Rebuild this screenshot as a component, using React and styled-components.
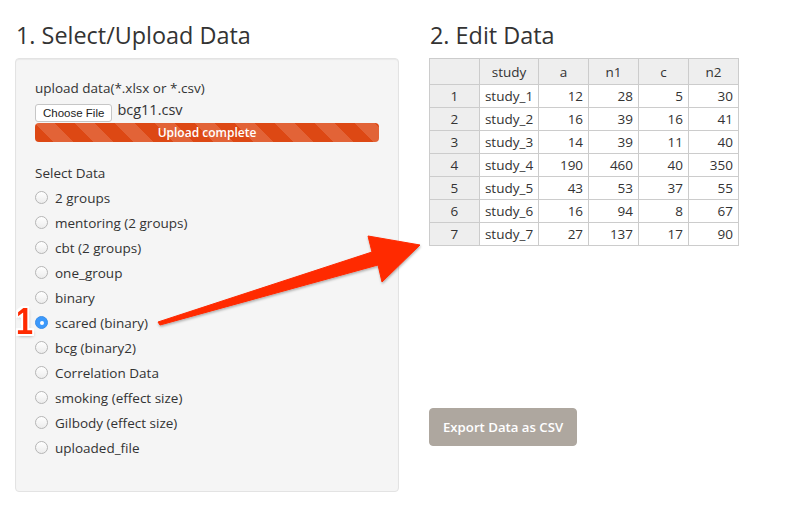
import styled, { createGlobalStyle } from 'styled-components'

const GlobalStyle = createGlobalStyle`
  html, body {
    margin: 0;
    background: #fff;
    font-family: "Open Sans", "Liberation Sans", sans-serif;
    font-size: 13.5px;
    color: #333;
  }
`

const DATASETS = [
  '2 groups',
  'mentoring (2 groups)',
  'cbt (2 groups)',
  'one_group',
  'binary',
  'scared (binary)',
  'bcg (binary2)',
  'Correlation Data',
  'smoking (effect size)',
  'Gilbody (effect size)',
  'uploaded_file',
]

const ROWS = [
  ['study_1', 12, 28, 5, 30],
  ['study_2', 16, 39, 16, 41],
  ['study_3', 14, 39, 11, 40],
  ['study_4', 190, 460, 40, 350],
  ['study_5', 43, 53, 37, 55],
  ['study_6', 16, 94, 8, 67],
  ['study_7', 27, 137, 17, 90],
]

const Page = styled.div`
  position: relative;
  display: flex;
  gap: 30px;
  padding-left: 15px;
  width: 789px;
  height: 515px;
  box-sizing: border-box;
`

const Column = styled.div`
  width: ${({ $w }) => $w}px;
  display: flex;
  flex-direction: column;
`

const Heading = styled.h3`
  font-size: 23.4px;
  font-weight: 400;
  line-height: 28px;
  margin: 21px 0 9px 1px;
  color: #333;
`

const Well = styled.div`
  background: #f5f5f5;
  border: 1px solid #e3e3e3;
  border-radius: 4px;
  box-shadow: inset 0 1px 1px rgba(0, 0, 0, 0.05);
  padding: 19px 19px 31px;
`

const Label = styled.div`
  line-height: 20px;
`

const FileRow = styled.div`
  display: flex;
  align-items: center;
  gap: 5px;
  height: 22px;
  margin-top: 2px;
`

const FileButton = styled.button`
  font-family: "Liberation Sans", Arial, sans-serif;
  font-size: 11.5px;
  height: 18px;
  padding: 0 7px;
  background: #fff;
  border: 1px solid #c6c6c6;
  border-radius: 3px;
  color: #222;
  margin-top: 4px;
`

const FileName = styled.span`
  font-size: 14.5px;
  margin-top: -3px;
`

const Progress = styled.div`
  height: 19px;
  border-radius: 4px;
  background-color: #dd4814;
  background-image: linear-gradient(
    45deg,
    rgba(255, 255, 255, 0.15) 25%,
    transparent 25%,
    transparent 50%,
    rgba(255, 255, 255, 0.15) 50%,
    rgba(255, 255, 255, 0.15) 75%,
    transparent 75%,
    transparent
  );
  background-size: 40px 40px;
  color: #fff;
  font-size: 12px;
  font-weight: 600;
  line-height: 19px;
  text-align: center;
  margin-top: 1px;
`

const SectionLabel = styled.div`
  line-height: 20px;
  margin-top: 21px;
  margin-bottom: 2px;
`

const RadioRow = styled.label`
  display: flex;
  align-items: center;
  gap: 7px;
  height: 25px;
`

const Radio = styled.span`
  width: 13px;
  height: 13px;
  border-radius: 50%;
  box-sizing: border-box;
  flex: none;
  background: ${({ $on }) => ($on ? '#3b99fc' : 'linear-gradient(#fff, #ececec)')};
  border: 1px solid ${({ $on }) => ($on ? '#3b8ee8' : '#b5b5b5')};
  display: flex;
  align-items: center;
  justify-content: center;

  &::after {
    content: '';
    width: 4px;
    height: 4px;
    border-radius: 50%;
    background: #fff;
    display: ${({ $on }) => ($on ? 'block' : 'none')};
  }
`

const Table = styled.table`
  border-collapse: collapse;
  width: 310px;
  font-size: 13.5px;
`

const Th = styled.th`
  background: #eee;
  border: 1px solid #ccc;
  font-weight: 400;
  height: 25px;
  padding: 0;
  text-align: center;
`

const Td = styled.td`
  border: 1px solid #ccc;
  height: 22px;
  padding: 0 5px;
  background: ${({ $head }) => ($head ? '#eee' : '#fff')};
  text-align: ${({ $align }) => $align || 'right'};
`

const ExportButton = styled.button`
  align-self: flex-start;
  margin-top: 162px;
  background: #aea79f;
  border: 1px solid #aea79f;
  border-radius: 4px;
  color: #fff;
  font-family: inherit;
  font-size: 13.2px;
  font-weight: 600;
  padding: 8px 13px;
  line-height: 20px;
`

const Arrow = styled.svg`
  position: absolute;
  left: 0;
  top: 0;
  pointer-events: none;
`

const Marker = styled.span`
  position: absolute;
  left: 16px;
  top: 301px;
  font-family: "Liberation Sans", Arial, sans-serif;
  font-size: 36px;
  font-weight: 700;
  color: #ff2a00;
  transform: scaleX(0.85);
  transform-origin: left top;
  text-shadow: -2px 0 #fff, 2px 0 #fff, 0 -2px #fff, 0 2px #fff, -2px -2px #fff,
    2px 2px #fff, -2px 2px #fff, 2px -2px #fff, 1px 2px 4px rgba(0, 0, 0, 0.4);
`

const COLS = [50, 59, 50, 50, 50, 50]

const App = () => (
  <Page>
    <GlobalStyle />
    <Column $w={384}>
      <Heading>1. Select/Upload Data</Heading>
      <Well>
        <Label>upload data(*.xlsx or *.csv)</Label>
        <FileRow>
          <FileButton>Choose File</FileButton>
          <FileName>bcg11.csv</FileName>
        </FileRow>
        <Progress>Upload complete</Progress>
        <SectionLabel>Select Data</SectionLabel>
        {DATASETS.map((name) => (
          <RadioRow key={name}>
            <Radio $on={name === 'scared (binary)'} />
            {name}
          </RadioRow>
        ))}
      </Well>
    </Column>
    <Column $w={340}>
      <Heading>2. Edit Data</Heading>
      <Table>
        <colgroup>
          {COLS.map((w, i) => (
            <col key={i} style={{ width: w }} />
          ))}
        </colgroup>
        <thead>
          <tr>
            <Th />
            <Th>study</Th>
            <Th>a</Th>
            <Th>n1</Th>
            <Th>c</Th>
            <Th>n2</Th>
          </tr>
        </thead>
        <tbody>
          {ROWS.map((row, i) => (
            <tr key={row[0]}>
              <Td $head $align="center">{i + 1}</Td>
              <Td $align="left">{row[0]}</Td>
              {row.slice(1).map((v, j) => (
                <Td key={j}>{v}</Td>
              ))}
            </tr>
          ))}
        </tbody>
      </Table>
      <ExportButton>Export Data as CSV</ExportButton>
    </Column>
    <Arrow width="789" height="515" viewBox="0 0 789 515">
      <defs>
        <filter id="shadow" x="-10%" y="-10%" width="120%" height="130%">
          <feDropShadow dx="0.5" dy="1.5" stdDeviation="1.2" floodColor="#000" floodOpacity="0.3" />
        </filter>
      </defs>
      <polygon
        points="158,322 372,252 368,236 420,245 382,282 378,265 160,325"
        fill="#ff2a00"
        strokeLinejoin="round"
        stroke="#ff2a00"
        strokeWidth="1"
        filter="url(#shadow)"
      />
    </Arrow>
    <Marker>1</Marker>
  </Page>
)

export default App
